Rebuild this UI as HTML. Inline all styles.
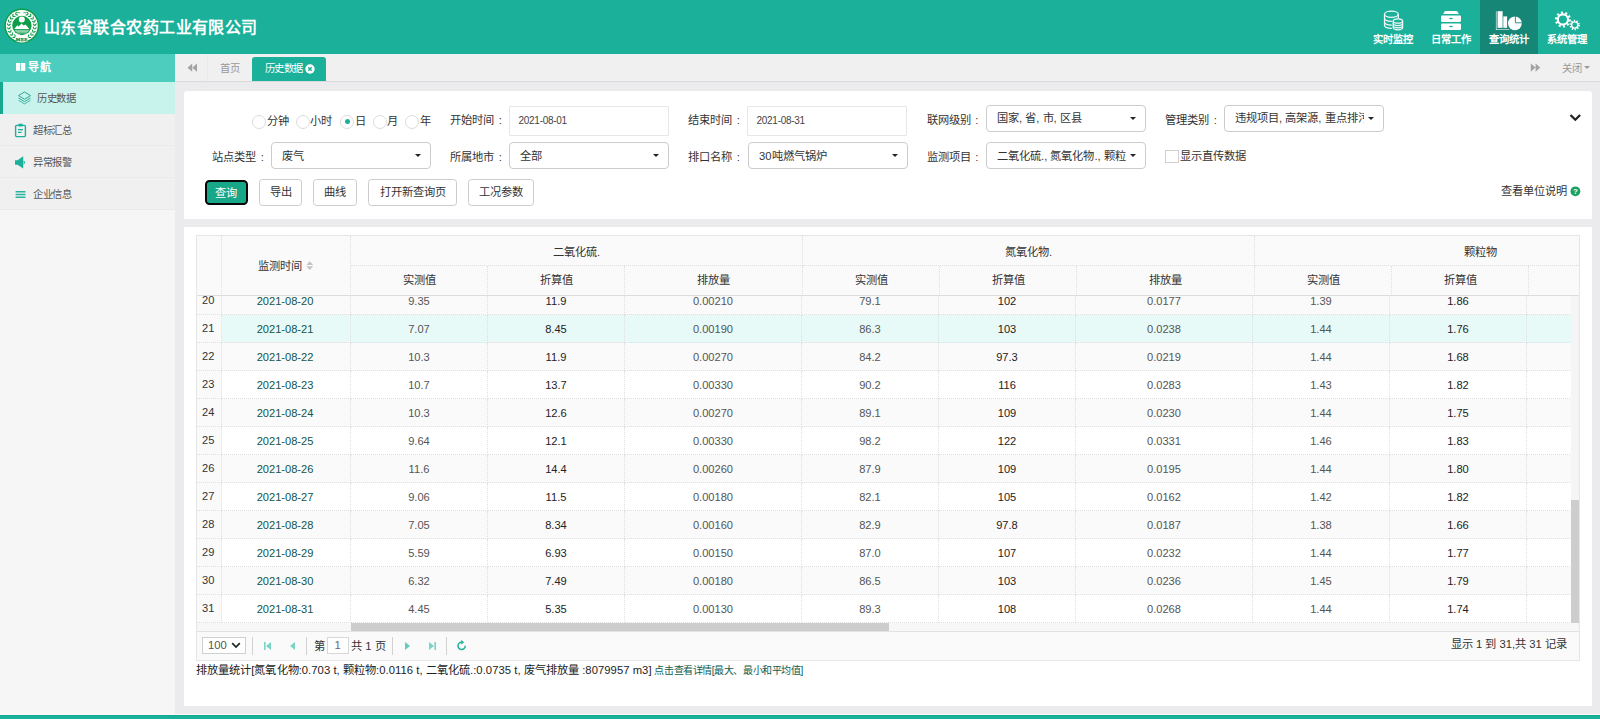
<!DOCTYPE html>
<html lang="zh-CN">
<head>
<meta charset="utf-8">
<title>历史数据</title>
<style>
*{box-sizing:border-box;margin:0;padding:0}
html,body{width:1600px;height:719px;overflow:hidden;background:#ebebed;font-family:"Liberation Sans",sans-serif;font-size:11.25px;color:#333}
#hdr{position:absolute;left:0;top:0;width:1600px;height:54px;background:#1bb09a}
#title{position:absolute;left:44px;top:15.3px;font-family:"Liberation Sans",sans-serif;font-weight:bold;font-size:16px;letter-spacing:.45px;line-height:26px;color:#fff;white-space:nowrap}
.tm{position:absolute;top:0;width:58px;height:54px;color:#fff;text-align:center}
.tm.on{background:#168777}
.tm span{position:absolute;left:0;width:58px;top:33px;font-size:10.3px;line-height:14px;font-weight:bold;white-space:nowrap}
#side{position:absolute;left:0;top:54px;width:175px;height:660px;background:#f6f6f6}
#navh{position:absolute;left:0;top:0;width:175px;height:28px;background:#4ccdbe;color:#fff;font-weight:bold;font-size:11px;letter-spacing:.6px;line-height:27px}
.ni{position:absolute;left:0;width:175px;height:32px;background:#f0f0f0;border-bottom:1px solid #eaeaea;font-size:10.3px;letter-spacing:-.4px;line-height:33px;color:#555}
.ni.on{background:#c8f3ec;border-left:3px solid #17a88d;border-bottom:none}
.ni span{position:absolute;top:0;white-space:nowrap}
.ni svg{position:absolute}
#tabs{position:absolute;left:175px;top:54px;width:1425px;height:28px;background:#f0f0f0;border-bottom:1px solid #dadada;font-size:10.3px;color:#999}
#tabs .t{position:absolute;top:0;line-height:30px;white-space:nowrap}
#tabon{position:absolute;left:77px;top:3px;width:74px;height:24px;letter-spacing:-.35px;background:#1bb09a;border-radius:3px 3px 0 0;color:#fff;line-height:24px}
#foot{position:absolute;left:0;top:714px;width:1600px;height:5px;background:#1bb09a;border-top:1px solid #fcfbfb;box-shadow:inset 0 1px 0 #13a78f}
.panel{position:absolute;background:#fff}
/* filter */
.lb{position:absolute;white-space:nowrap;line-height:16px;font-size:11.25px;color:#333;word-spacing:1.5px}
.rd{position:absolute;width:14px;height:14px;border:1px solid #dcdcdc;border-radius:50%;background:#fff}
.rd.ck:after{content:"";position:absolute;left:3.5px;top:3.5px;width:5px;height:5px;border-radius:50%;background:#1bb09a}
.inp{position:absolute;width:160px;height:30px;border:1px solid #e5e6e7;border-radius:1px;background:#fff;font-size:10px;letter-spacing:-.28px;line-height:28px;padding-left:8.5px;color:#444}
.sel{position:absolute;width:160px;height:27px;border:1px solid #ccc;border-radius:4px;background:#fff;font-size:11.25px;line-height:23px;padding-top:1px;padding-left:10px;color:#333;white-space:nowrap;overflow:hidden}
.sel i{position:absolute;right:9.5px;top:10.5px;width:0;height:0;border-left:3.5px solid transparent;border-right:3.5px solid transparent;border-top:3.5px solid #222}
.sel b{font-weight:normal;display:block;overflow:hidden;width:129px}
.btn{position:absolute;top:179px;height:26.5px;border:1px solid #ccc;border-radius:3.5px;background:#fff;font-size:11.25px;line-height:25px;text-align:center;color:#333;white-space:nowrap}
.btn.pri{background:#18a689;color:#fff;border:2.3px solid #080808;border-radius:4.5px;line-height:22px;top:179.7px;height:25.5px}
/* grid */
#grid{position:absolute;left:196px;top:235px;width:1384px;height:426px;border:1px solid #e6e6e6;background:#fff;overflow:hidden}
#gh{position:absolute;left:0;top:0;width:1382px;height:60px;background:#fafafa;border-bottom:1px solid #ddd;overflow:hidden}
.hc{position:absolute;text-align:center;font-size:11.25px;color:#333;border-right:1px dotted #dfdfdf;white-space:nowrap}
.hc.g{top:0;height:30px;line-height:32px;border-bottom:1px dotted #dfdfdf}
.hc.s{top:30px;height:30px;line-height:28px}
#gbL{position:absolute;left:0;top:60px;width:154px;height:327px;overflow:hidden}
#gbR{position:absolute;left:154px;top:60px;width:1220px;height:327px;overflow:hidden}
table{border-collapse:separate;border-spacing:0;table-layout:fixed;position:absolute;top:-9px;left:0}
td{height:28px;line-height:26px;padding-top:1px !important;border-bottom:1px dotted #dfdfdf;border-right:1px dotted #dfdfdf;text-align:center;font-size:11.1px;color:#555;white-space:nowrap;overflow:hidden;padding:0}
tr.st td{background:#fafafa}
tr.hv td{background:#e8faf8}
td.rn{background:#fafafa !important;color:#333;text-align:left;padding-left:5px;padding-top:0 !important;padding-bottom:1px}
td.c0{color:#0f554b;padding-right:2px}
td.c2,td.c5,td.c8{color:#222}
#vs{position:absolute;left:1374px;top:60px;width:8px;height:327px;background:#f5f5f5}
#vs i{position:absolute;left:0;top:204px;width:8px;height:123px;background:#cdcdcd}
#hs{position:absolute;left:0;top:387px;width:1382px;height:8px;background:#f7f7f7}
#hs i{position:absolute;left:154px;top:0;width:538px;height:8px;background:#cdcdcd}
#pg{position:absolute;left:0;top:395px;width:1382px;height:29px;background:#fafafa;border-top:1px solid #e2e2e2;font-size:11.25px;color:#333}
#pg .sp{position:absolute;top:5px;width:1px;height:18px;background:#d2d2d2}
#pg .x{position:absolute;white-space:nowrap;line-height:28px}
</style>
</head>
<body>
<div id="hdr">
  <svg style="position:absolute;left:0;top:0" width="44" height="54" viewBox="0 0 44 54">
    <circle cx="21.8" cy="25.8" r="17.4" fill="#0f9d49"/>
    <circle cx="21.8" cy="25.8" r="15.9" fill="#fff"/>
    <g fill="#0f9d49"><ellipse cx="13.97" cy="37.41" rx="1.55" ry=".62" transform="rotate(176.0 13.97 37.41)"/><ellipse cx="15.03" cy="35.83" rx="1.55" ry=".62" transform="rotate(252.0 15.03 35.83)"/><ellipse cx="11.20" cy="34.95" rx="1.55" ry=".62" transform="rotate(191.2 11.20 34.95)"/><ellipse cx="12.64" cy="33.71" rx="1.55" ry=".62" transform="rotate(267.2 12.64 33.71)"/><ellipse cx="9.17" cy="31.85" rx="1.55" ry=".62" transform="rotate(206.4 9.17 31.85)"/><ellipse cx="10.89" cy="31.03" rx="1.55" ry=".62" transform="rotate(282.4 10.89 31.03)"/><ellipse cx="8.03" cy="28.33" rx="1.55" ry=".62" transform="rotate(221.6 8.03 28.33)"/><ellipse cx="9.90" cy="27.98" rx="1.55" ry=".62" transform="rotate(297.6 9.90 27.98)"/><ellipse cx="7.85" cy="24.63" rx="1.55" ry=".62" transform="rotate(236.8 7.85 24.63)"/><ellipse cx="9.74" cy="24.79" rx="1.55" ry=".62" transform="rotate(312.8 9.74 24.79)"/><ellipse cx="8.64" cy="21.01" rx="1.55" ry=".62" transform="rotate(252.0 8.64 21.01)"/><ellipse cx="10.43" cy="21.66" rx="1.55" ry=".62" transform="rotate(328.0 10.43 21.66)"/><ellipse cx="10.36" cy="17.73" rx="1.55" ry=".62" transform="rotate(267.2 10.36 17.73)"/><ellipse cx="11.91" cy="18.83" rx="1.55" ry=".62" transform="rotate(343.2 11.91 18.83)"/><ellipse cx="12.88" cy="15.01" rx="1.55" ry=".62" transform="rotate(282.4 12.88 15.01)"/><ellipse cx="14.09" cy="16.48" rx="1.55" ry=".62" transform="rotate(358.4 14.09 16.48)"/><ellipse cx="16.02" cy="13.05" rx="1.55" ry=".62" transform="rotate(297.6 16.02 13.05)"/><ellipse cx="16.80" cy="14.78" rx="1.55" ry=".62" transform="rotate(373.6 16.80 14.78)"/><ellipse cx="29.63" cy="37.41" rx="1.55" ry=".62" transform="rotate(4.0 29.63 37.41)"/><ellipse cx="28.57" cy="35.83" rx="1.55" ry=".62" transform="rotate(-72.0 28.57 35.83)"/><ellipse cx="32.40" cy="34.95" rx="1.55" ry=".62" transform="rotate(-11.2 32.40 34.95)"/><ellipse cx="30.96" cy="33.71" rx="1.55" ry=".62" transform="rotate(-87.2 30.96 33.71)"/><ellipse cx="34.43" cy="31.85" rx="1.55" ry=".62" transform="rotate(-26.4 34.43 31.85)"/><ellipse cx="32.71" cy="31.03" rx="1.55" ry=".62" transform="rotate(-102.4 32.71 31.03)"/><ellipse cx="35.57" cy="28.33" rx="1.55" ry=".62" transform="rotate(-41.6 35.57 28.33)"/><ellipse cx="33.70" cy="27.98" rx="1.55" ry=".62" transform="rotate(-117.6 33.70 27.98)"/><ellipse cx="35.75" cy="24.63" rx="1.55" ry=".62" transform="rotate(-56.8 35.75 24.63)"/><ellipse cx="33.86" cy="24.79" rx="1.55" ry=".62" transform="rotate(-132.8 33.86 24.79)"/><ellipse cx="34.96" cy="21.01" rx="1.55" ry=".62" transform="rotate(-72.0 34.96 21.01)"/><ellipse cx="33.17" cy="21.66" rx="1.55" ry=".62" transform="rotate(-148.0 33.17 21.66)"/><ellipse cx="33.24" cy="17.73" rx="1.55" ry=".62" transform="rotate(-87.2 33.24 17.73)"/><ellipse cx="31.69" cy="18.83" rx="1.55" ry=".62" transform="rotate(-163.2 31.69 18.83)"/><ellipse cx="30.72" cy="15.01" rx="1.55" ry=".62" transform="rotate(-102.4 30.72 15.01)"/><ellipse cx="29.51" cy="16.48" rx="1.55" ry=".62" transform="rotate(-178.4 29.51 16.48)"/><ellipse cx="27.58" cy="13.05" rx="1.55" ry=".62" transform="rotate(-117.6 27.58 13.05)"/><ellipse cx="26.80" cy="14.78" rx="1.55" ry=".62" transform="rotate(-193.6 26.80 14.78)"/></g>
    <path d="M15.2 36.6 A13 13 0 0 0 28.4 36.6 L27.4 41.4 A16.5 16.5 0 0 1 16.2 41.4 Z" fill="#fff"/>
    <path d="M17 12.7 H20.2 M23.4 12.7 H26.6" stroke="#0f9d49" stroke-width=".8"/><circle cx="21.9" cy="25.5" r="9.7" fill="#0f9d49"/>
    <circle cx="21.8" cy="19.6" r="3" fill="#fff"/>
    <path d="M14.3 28.9 L17.3 25.3 L18.6 26.6 L21.6 23.6 L23.6 25.6 L25.6 24.4 L29.3 28.9 Z" fill="#fff"/>
    <path d="M14.8 30.3 H29 M15.6 31.6 H28.2 M16.8 32.9 H27" stroke="#fff" stroke-width="0.7" fill="none" opacity=".85"/>
    <text x="21.8" y="40.6" font-family="Liberation Serif,serif" font-weight="bold" font-size="4.8" fill="#0b8a3e" stroke="#0b8a3e" stroke-width=".25" text-anchor="middle" letter-spacing=".4">MEE</text>
  </svg>
  <div id="title">山东省联合农药工业有限公司</div>
  <div class="tm" style="left:1364px"><span>实时监控</span></div>
  <div class="tm" style="left:1422px"><span>日常工作</span></div>
  <div class="tm on" style="left:1480px"><span>查询统计</span></div>
  <div class="tm" style="left:1538px"><span>系统管理</span></div>
  <svg style="position:absolute;left:1360px;top:0" width="240" height="54" viewBox="1360 0 240 54">
    <!-- database -->
    <g fill="none" stroke="#fff" stroke-width="1.25" opacity=".93">
      <ellipse cx="1391.4" cy="14.3" rx="6.9" ry="3.1"/>
      <path d="M1384.5 14.3 V25.3 C1384.5 26.9 1387.5 28.3 1391.8 28.4"/>
      <path d="M1398.3 14.3 V18.6"/>
      <path d="M1384.5 18.3 C1384.5 20 1387.6 21.3 1391.8 21.4"/>
      <path d="M1384.5 22 C1384.5 23.7 1387.6 25 1391.8 25.1"/>
      <ellipse cx="1397.9" cy="21" rx="4.7" ry="2.2"/>
      <path d="M1393.2 21 V27.6 C1393.2 28.9 1395.3 29.8 1397.9 29.8 C1400.5 29.8 1402.6 28.9 1402.6 27.6 V21"/>
      <path d="M1393.2 23.3 C1393.2 24.6 1395.3 25.5 1397.9 25.5 C1400.5 25.5 1402.6 24.6 1402.6 23.3"/>
      <path d="M1393.2 25.6 C1393.2 26.9 1395.3 27.8 1397.9 27.8 C1400.5 27.8 1402.6 26.9 1402.6 25.6"/>
    </g>
    <!-- drawers -->
    <g fill="#fff">
      <path d="M1443.2 14 L1444.6 11.6 Q1445 11 1445.8 11 H1456.2 Q1457 11 1457.4 11.6 L1458.8 14 Z"/>
      <rect x="1441" y="15.5" width="20" height="6.4" rx="1.3"/>
      <rect x="1441" y="23.6" width="20" height="6.4" rx="1.3"/>
    </g>
    <ellipse cx="1451" cy="18.5" rx="2" ry=".75" fill="#1bb09a"/>
    <ellipse cx="1451" cy="26.6" rx="2" ry=".75" fill="#1bb09a"/>
    <!-- chart -->
    <g fill="#fff">
      <rect x="1495.9" y="11.2" width=".7" height="18.7" opacity=".85"/>
      <rect x="1495.9" y="29.3" width="13.4" height=".7" opacity=".85"/>
      <rect x="1497.6" y="11.2" width="5" height="16.6"/>
      <rect x="1503.3" y="16.4" width="3.8" height="11.4"/>
      <circle cx="1514.9" cy="23.3" r="6.9"/>
    </g>
    <path d="M1515.4 16 V22.8 H1522" stroke="#168777" stroke-width=".9" fill="none"/>
    <!-- gears -->
    <g fill="none" stroke="#fff">
      <circle cx="1562.9" cy="19.5" r="5.1" stroke-width="2.1"/>
      <circle cx="1562.9" cy="19.5" r="6.9" stroke-width="2.3" stroke-dasharray="2.05 2.285"/>
      <circle cx="1574.7" cy="25" r="3.1" stroke-width="1.4"/>
      <circle cx="1574.7" cy="25" r="4.4" stroke-width="1.7" stroke-dasharray="1.3 1.464"/>
    </g>
  </svg>
</div>
<div id="side">
  <div id="navh">
    <svg style="position:absolute;left:15px;top:9px" width="12" height="9" viewBox="0 0 12 9"><rect x="1" y="0" width="4.3" height="7.8" fill="#fff"/><rect x="6" y="0" width="4.3" height="7.8" fill="#fff"/></svg>
    <span style="position:absolute;left:28px">导航</span></div>
  <div class="ni on" style="top:28px">
    <svg style="left:14px;top:9px" width="16" height="15" viewBox="0 0 16 15" fill="none" stroke="#2aa894" stroke-width="1"><path d="M7.5 1 L13.5 4.6 L7.5 8.2 L1.5 4.6 Z"/><path d="M1.5 7 L7.5 10.6 L13.5 7"/><path d="M1.5 9.3 L7.5 12.9 L13.5 9.3" opacity=".8"/></svg>
    <span style="left:34px">历史数据</span></div>
  <div class="ni" style="top:60px">
    <svg style="left:14px;top:9px" width="14" height="15" viewBox="0 0 14 15"><rect x="1.6" y="2.4" width="9.8" height="11.2" rx="1" fill="none" stroke="#1bb09a" stroke-width="1.4"/><rect x="4.3" y="0.8" width="4.4" height="2.6" rx=".6" fill="#1bb09a"/><path d="M4 6.6 H9 M4 9.4 H7.6" stroke="#1bb09a" stroke-width="1.2"/></svg>
    <span style="left:33px">超标汇总</span></div>
  <div class="ni" style="top:92px">
    <svg style="left:14px;top:9px" width="14" height="15" viewBox="0 0 14 15"><path d="M1 5.2 H3.6 L9.2 1.2 V13.6 L3.6 9.8 H1 Z" fill="#1bb09a"/><path d="M9.6 5.6 A2 2 0 0 1 9.6 9.4 Z" fill="#1bb09a"/></svg>
    <span style="left:33px">异常报警</span></div>
  <div class="ni" style="top:124px">
    <svg style="left:14px;top:9px" width="14" height="15" viewBox="0 0 14 15"><path d="M1.6 4.7 H11.5 M1.6 7.5 H11.5 M1.6 10.3 H11.5" stroke="#2ab39e" stroke-width="1.4"/></svg>
    <span style="left:33px">企业信息</span></div>
</div>
<div id="tabs">
  <svg style="position:absolute;left:12px;top:9px" width="11" height="10" viewBox="0 0 11 10"><path d="M5.2 0.6 V8.8 L0.5 4.7 Z M10 0.6 V8.8 L5.3 4.7 Z" fill="#a3a3a3"/></svg>
  <div style="position:absolute;left:32px;top:0;width:1px;height:27px;background:#eaeaea"></div>
  <div class="t" style="left:45px">首页</div>
  <div id="tabon"><span style="position:absolute;left:12.5px;top:0">历史数据</span>
    <svg style="position:absolute;left:53px;top:6.5px" width="10" height="10" viewBox="0 0 10 10"><circle cx="5" cy="5" r="4.7" fill="#fff"/><path d="M3.3 3.3 L6.7 6.7 M6.7 3.3 L3.3 6.7" stroke="#1bb09a" stroke-width="1.5"/></svg>
  </div>
  <svg style="position:absolute;left:1355px;top:9px" width="11" height="10" viewBox="0 0 11 10"><path d="M0.8 0.4 V8.8 L5.5 4.6 Z M5.6 0.4 V8.8 L10.3 4.6 Z" fill="#a3a3a3"/></svg>
  <div class="t" style="left:1387px">关闭</div>
  <div style="position:absolute;left:1408.5px;top:12px;width:0;height:0;border-left:3.3px solid transparent;border-right:3.3px solid transparent;border-top:3.3px solid #999"></div>
</div>
<div id="foot"></div>
<div class="panel" id="fp" style="left:184px;top:91px;width:1408px;height:128px;border-radius:3px 3px 0 0"></div>
<div id="flt">
  <div class="rd" style="left:252px;top:114.5px"></div><div class="lb" style="left:266.5px;top:113px">分钟</div>
  <div class="rd" style="left:296px;top:114.5px"></div><div class="lb" style="left:310px;top:113px">小时</div>
  <div class="rd ck" style="left:340px;top:114.5px"></div><div class="lb" style="left:354.5px;top:113px">日</div>
  <div class="rd" style="left:373px;top:114.5px"></div><div class="lb" style="left:387px;top:113px">月</div>
  <div class="rd" style="left:405px;top:114.5px"></div><div class="lb" style="left:419.5px;top:113px">年</div>

  <div class="lb" style="left:450px;top:112px">开始时间 :</div>
  <div class="inp" style="left:509px;top:106px">2021-08-01</div>
  <div class="lb" style="left:688px;top:112px">结束时间 :</div>
  <div class="inp" style="left:747px;top:106px">2021-08-31</div>
  <div class="lb" style="left:926.5px;top:112px">联网级别 :</div>
  <div class="sel" style="left:986px;top:105px"><b>国家, 省, 市, 区县</b><i></i></div>
  <div class="lb" style="left:1165px;top:112px">管理类别 :</div>
  <div class="sel" style="left:1224px;top:105px"><b>违规项目, 高架源, 重点排污单位</b><i></i></div>
  <svg style="position:absolute;left:1568.5px;top:112.5px" width="13" height="10" viewBox="0 0 13 10"><path d="M1.5 2 L6.3 6.7 L11.1 2" fill="none" stroke="#222" stroke-width="2.3"/></svg>

  <div class="lb" style="left:212px;top:149px">站点类型 :</div>
  <div class="sel" style="left:271px;top:142px;padding-top:2px"><b>废气</b><i></i></div>
  <div class="lb" style="left:450px;top:149px">所属地市 :</div>
  <div class="sel" style="left:509px;top:142px;padding-top:2px"><b>全部</b><i></i></div>
  <div class="lb" style="left:688px;top:149px">排口名称 :</div>
  <div class="sel" style="left:748px;top:142px;padding-top:2px"><b>30吨燃气锅炉</b><i></i></div>
  <div class="lb" style="left:926.5px;top:149px">监测项目 :</div>
  <div class="sel" style="left:986px;top:142px;padding-top:2px"><b>二氧化硫., 氮氧化物., 颗粒物</b><i></i></div>
  <div style="position:absolute;left:1165px;top:149.5px;width:13.5px;height:13.5px;border:1px solid #d0d0d0;background:#fff"></div>
  <div class="lb" style="left:1179.5px;top:148px">显示直传数据</div>

  <div class="btn pri" style="left:204.5px;width:43px">查询</div>
  <div class="btn" style="left:259px;width:43px">导出</div>
  <div class="btn" style="left:313px;width:44px">曲线</div>
  <div class="btn" style="left:368px;width:89px">打开新查询页</div>
  <div class="btn" style="left:468px;width:66px">工况参数</div>

  <div class="lb" style="left:1501px;top:183px">查看单位说明</div>
  <svg style="position:absolute;left:1570px;top:186px" width="11" height="11" viewBox="0 0 11 11"><circle cx="5.4" cy="5.3" r="4.9" fill="#19a15f"/><text x="5.4" y="8.3" font-family="Liberation Sans,sans-serif" font-weight="bold" font-size="8" fill="#fff" text-anchor="middle">?</text></svg>
</div>
<div class="panel" id="tp" style="left:184px;top:227px;width:1408px;height:479px"></div>
<div id="grid">
  <div id="gh">
    <div class="hc" style="left:0;top:0;width:25px;height:60px"></div>
    <div class="hc" style="left:25px;top:0;width:129px;height:60px;line-height:60px;padding-right:12px">监测时间<svg style="position:absolute;left:83.5px;top:24.5px" width="8" height="10" viewBox="0 0 8 10"><path d="M3.8 0.3 L7.2 3.9 H0.4 Z M3.8 8.9 L7.2 5.3 H0.4 Z" fill="#c4c4c4"/></svg></div>
    <div class="hc g" style="left:154px;width:452px">二氧化硫.</div>
    <div class="hc s" style="left:154px;width:137px">实测值</div>
    <div class="hc s" style="left:291px;width:137px">折算值</div>
    <div class="hc s" style="left:428px;width:178px">排放量</div>
    <div class="hc g" style="left:606px;width:452px">氮氧化物.</div>
    <div class="hc s" style="left:606px;width:137px">实测值</div>
    <div class="hc s" style="left:743px;width:137px">折算值</div>
    <div class="hc s" style="left:880px;width:178px">排放量</div>
    <div class="hc g" style="left:1058px;width:452px">颗粒物</div>
    <div class="hc s" style="left:1058px;width:137px">实测值</div>
    <div class="hc s" style="left:1195px;width:137px">折算值</div>
    <div class="hc s" style="left:1332px;width:178px">排放量</div>
  </div>
<div id="gbL"><table style="width:154px"><colgroup><col style="width:25px"><col style="width:129px"></colgroup>
<tr class="st"><td class="rn">20</td><td class="c0">2021-08-20</td></tr>
<tr class="hv"><td class="rn">21</td><td class="c0">2021-08-21</td></tr>
<tr class="st"><td class="rn">22</td><td class="c0">2021-08-22</td></tr>
<tr><td class="rn">23</td><td class="c0">2021-08-23</td></tr>
<tr class="st"><td class="rn">24</td><td class="c0">2021-08-24</td></tr>
<tr><td class="rn">25</td><td class="c0">2021-08-25</td></tr>
<tr class="st"><td class="rn">26</td><td class="c0">2021-08-26</td></tr>
<tr><td class="rn">27</td><td class="c0">2021-08-27</td></tr>
<tr class="st"><td class="rn">28</td><td class="c0">2021-08-28</td></tr>
<tr><td class="rn">29</td><td class="c0">2021-08-29</td></tr>
<tr class="st"><td class="rn">30</td><td class="c0">2021-08-30</td></tr>
<tr><td class="rn">31</td><td class="c0">2021-08-31</td></tr>
</table></div>
<div id="gbR"><table style="width:1353.0px"><colgroup><col style="width:137.0px"><col style="width:137.0px"><col style="width:177.0px"><col style="width:137.0px"><col style="width:137.0px"><col style="width:177.0px"><col style="width:137.0px"><col style="width:137.0px"><col style="width:177.0px"></colgroup>
<tr class="st"><td class="c1">9.35</td><td class="c2">11.9</td><td class="c3">0.00210</td><td class="c4">79.1</td><td class="c5">102</td><td class="c6">0.0177</td><td class="c7">1.39</td><td class="c8">1.86</td><td class="c9"></td></tr>
<tr class="hv"><td class="c1">7.07</td><td class="c2">8.45</td><td class="c3">0.00190</td><td class="c4">86.3</td><td class="c5">103</td><td class="c6">0.0238</td><td class="c7">1.44</td><td class="c8">1.76</td><td class="c9"></td></tr>
<tr class="st"><td class="c1">10.3</td><td class="c2">11.9</td><td class="c3">0.00270</td><td class="c4">84.2</td><td class="c5">97.3</td><td class="c6">0.0219</td><td class="c7">1.44</td><td class="c8">1.68</td><td class="c9"></td></tr>
<tr><td class="c1">10.7</td><td class="c2">13.7</td><td class="c3">0.00330</td><td class="c4">90.2</td><td class="c5">116</td><td class="c6">0.0283</td><td class="c7">1.43</td><td class="c8">1.82</td><td class="c9"></td></tr>
<tr class="st"><td class="c1">10.3</td><td class="c2">12.6</td><td class="c3">0.00270</td><td class="c4">89.1</td><td class="c5">109</td><td class="c6">0.0230</td><td class="c7">1.44</td><td class="c8">1.75</td><td class="c9"></td></tr>
<tr><td class="c1">9.64</td><td class="c2">12.1</td><td class="c3">0.00330</td><td class="c4">98.2</td><td class="c5">122</td><td class="c6">0.0331</td><td class="c7">1.46</td><td class="c8">1.83</td><td class="c9"></td></tr>
<tr class="st"><td class="c1">11.6</td><td class="c2">14.4</td><td class="c3">0.00260</td><td class="c4">87.9</td><td class="c5">109</td><td class="c6">0.0195</td><td class="c7">1.44</td><td class="c8">1.80</td><td class="c9"></td></tr>
<tr><td class="c1">9.06</td><td class="c2">11.5</td><td class="c3">0.00180</td><td class="c4">82.1</td><td class="c5">105</td><td class="c6">0.0162</td><td class="c7">1.42</td><td class="c8">1.82</td><td class="c9"></td></tr>
<tr class="st"><td class="c1">7.05</td><td class="c2">8.34</td><td class="c3">0.00160</td><td class="c4">82.9</td><td class="c5">97.8</td><td class="c6">0.0187</td><td class="c7">1.38</td><td class="c8">1.66</td><td class="c9"></td></tr>
<tr><td class="c1">5.59</td><td class="c2">6.93</td><td class="c3">0.00150</td><td class="c4">87.0</td><td class="c5">107</td><td class="c6">0.0232</td><td class="c7">1.44</td><td class="c8">1.77</td><td class="c9"></td></tr>
<tr class="st"><td class="c1">6.32</td><td class="c2">7.49</td><td class="c3">0.00180</td><td class="c4">86.5</td><td class="c5">103</td><td class="c6">0.0236</td><td class="c7">1.45</td><td class="c8">1.79</td><td class="c9"></td></tr>
<tr><td class="c1">4.45</td><td class="c2">5.35</td><td class="c3">0.00130</td><td class="c4">89.3</td><td class="c5">108</td><td class="c6">0.0268</td><td class="c7">1.44</td><td class="c8">1.74</td><td class="c9"></td></tr>
</table></div>
  <div id="vs"><i></i></div>
  <div id="hs"><i></i></div>
  <div id="pg">
    <div style="position:absolute;left:5px;top:5px;width:44px;height:16.5px;border:1px solid #d0d0d0;border-radius:0;background:#fff;line-height:14px;padding-left:5px;font-size:11.25px;color:#555">100<svg style="position:absolute;left:28px;top:4px" width="10" height="7" viewBox="0 0 10 7"><path d="M1.2 1.2 L5 5 L8.8 1.2" fill="none" stroke="#222" stroke-width="1.7"/></svg></div>
    <div class="sp" style="left:55px"></div>
    <svg style="position:absolute;left:66px;top:9px" width="9" height="10" viewBox="0 0 9 10"><path d="M1 1 H2.6 V9 H1 Z M8 1 V9 L3 5 Z" fill="#7ad3c5"/></svg>
    <svg style="position:absolute;left:91px;top:9px" width="9" height="10" viewBox="0 0 9 10"><path d="M7 1 V9 L2 5 Z" fill="#7ad3c5"/></svg>
    <div class="sp" style="left:109px"></div>
    <div class="x" style="left:116.5px">第</div>
    <div style="position:absolute;left:130px;top:5px;width:21.5px;height:17px;border:1px solid #d8d8d8;background:#fff;text-align:center;line-height:15px;font-size:11.25px;color:#667">1</div>
    <div class="x" style="left:154px">共 1 页</div>
    <div class="sp" style="left:194.5px"></div>
    <svg style="position:absolute;left:206px;top:9px" width="9" height="10" viewBox="0 0 9 10"><path d="M2 1 V9 L7 5 Z" fill="#62cbbb"/></svg>
    <svg style="position:absolute;left:231px;top:9px" width="9" height="10" viewBox="0 0 9 10"><path d="M1 1 V9 L6 5 Z M6.4 1 H8 V9 H6.4 Z" fill="#7ad3c5"/></svg>
    <div class="sp" style="left:248.5px"></div>
    <svg style="position:absolute;left:259px;top:8px" width="11" height="11" viewBox="0 0 11 11"><path d="M5.6 2.2 A3.6 3.6 0 1 0 9.2 5.8" fill="none" stroke="#1bb09a" stroke-width="1.5"/><path d="M5.2 0 L8.2 2.2 L5.2 4.4 Z" fill="#1bb09a"/></svg>
    <div class="x" style="right:12px;top:-2px">显示 1 到 31,共 31 记录</div>
  </div>
</div>
<div style="position:absolute;left:196px;top:662px;line-height:16px;font-size:11.25px;letter-spacing:.05px;color:#222;white-space:nowrap">排放量统计[氮氧化物:0.703 t, 颗粒物:0.0116 t, 二氧化硫.:0.0735 t, 废气排放量 :8079957 m3] <span style="font-size:10px;letter-spacing:-.42px;color:#0e5c50;margin-left:-.4px">点击查看详情[最大、最小和平均值]</span></div>
</body>
</html>
